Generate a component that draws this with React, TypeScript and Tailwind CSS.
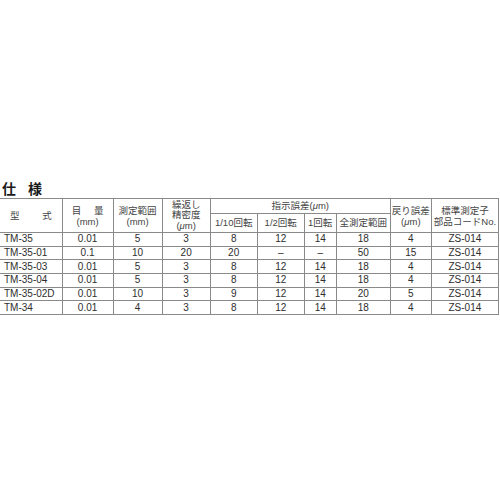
const rows = [
  ['TM-35', '0.01', '5', '3', '8', '12', '14', '18', '4', 'ZS-014'],
  ['TM-35-01', '0.1', '10', '20', '20', '–', '–', '50', '15', 'ZS-014'],
  ['TM-35-03', '0.01', '5', '3', '8', '12', '14', '18', '4', 'ZS-014'],
  ['TM-35-04', '0.01', '5', '3', '8', '12', '14', '18', '4', 'ZS-014'],
  ['TM-35-02D', '0.01', '10', '3', '9', '12', '14', '20', '5', 'ZS-014'],
  ['TM-34', '0.01', '4', '3', '8', '12', '14', '18', '4', 'ZS-014'],
];

const widths = [62, 51, 49, 48, 47, 47, 32, 54, 41, 67];

const cell = 'whitespace-nowrap border border-[#8a8a8a] p-0 text-center align-middle';

function Mu() {
  return <span className="italic">μ</span>;
}

export default function App() {
  return (
    <div
      className="h-[500px] w-[500px] bg-white pt-[180px] text-[#2e2e2e]"
      style={{ fontFamily: '"Liberation Sans", "Noto Sans CJK JP", sans-serif' }}
    >
      <p className="pl-[2px] text-[14px] font-bold leading-[18px] tracking-[4px] text-[#1a1a1a]">仕 様</p>
      <table className="w-[499px] table-fixed border-collapse text-[10px] leading-none">
        <colgroup>
          {widths.map((w, i) => (
            <col key={i} style={{ width: w }} />
          ))}
        </colgroup>
        <thead className="text-[9.5px] text-[#444]">
          <tr className="h-[15px]">
            <th rowSpan={2} className={`${cell} border-l-0 pl-[10px] font-normal tracking-[10px]`}>
              型 式
            </th>
            <th rowSpan={2} className={`${cell} font-normal leading-[11px]`}>
              <div className="pl-[5px] tracking-[5px]">目 量</div>
              <div>(mm)</div>
            </th>
            <th rowSpan={2} className={`${cell} font-normal leading-[11px]`}>
              <div>測定範囲</div>
              <div>(mm)</div>
            </th>
            <th rowSpan={2} className={`${cell} font-normal leading-[10.5px]`}>
              <div>繰返し</div>
              <div>精密度</div>
              <div>
                (<Mu />m)
              </div>
            </th>
            <th colSpan={4} className={`${cell} font-normal`}>
              指示誤差(<Mu />m)
            </th>
            <th rowSpan={2} className={`${cell} font-normal leading-[11px]`}>
              <div>戻り誤差</div>
              <div>
                (<Mu />m)
              </div>
            </th>
            <th rowSpan={2} className={`${cell} font-normal leading-[11px]`}>
              <div>標準測定子</div>
              <div>部品コードNo.</div>
            </th>
          </tr>
          <tr className="h-[19px]">
            <th className={`${cell} font-normal`}>1/10回転</th>
            <th className={`${cell} font-normal`}>1/2回転</th>
            <th className={`${cell} font-normal`}>1回転</th>
            <th className={`${cell} font-normal`}>全測定範囲</th>
          </tr>
        </thead>
        <tbody>
          {rows.map((r) => (
            <tr key={r[0]} className="h-[13.7px]">
              {r.map((v, i) => (
                <td
                  key={i}
                  className={i === 0 ? `${cell} border-l-0 pl-[4px] text-left` : cell}
                >
                  {v}
                </td>
              ))}
            </tr>
          ))}
        </tbody>
      </table>
    </div>
  );
}
